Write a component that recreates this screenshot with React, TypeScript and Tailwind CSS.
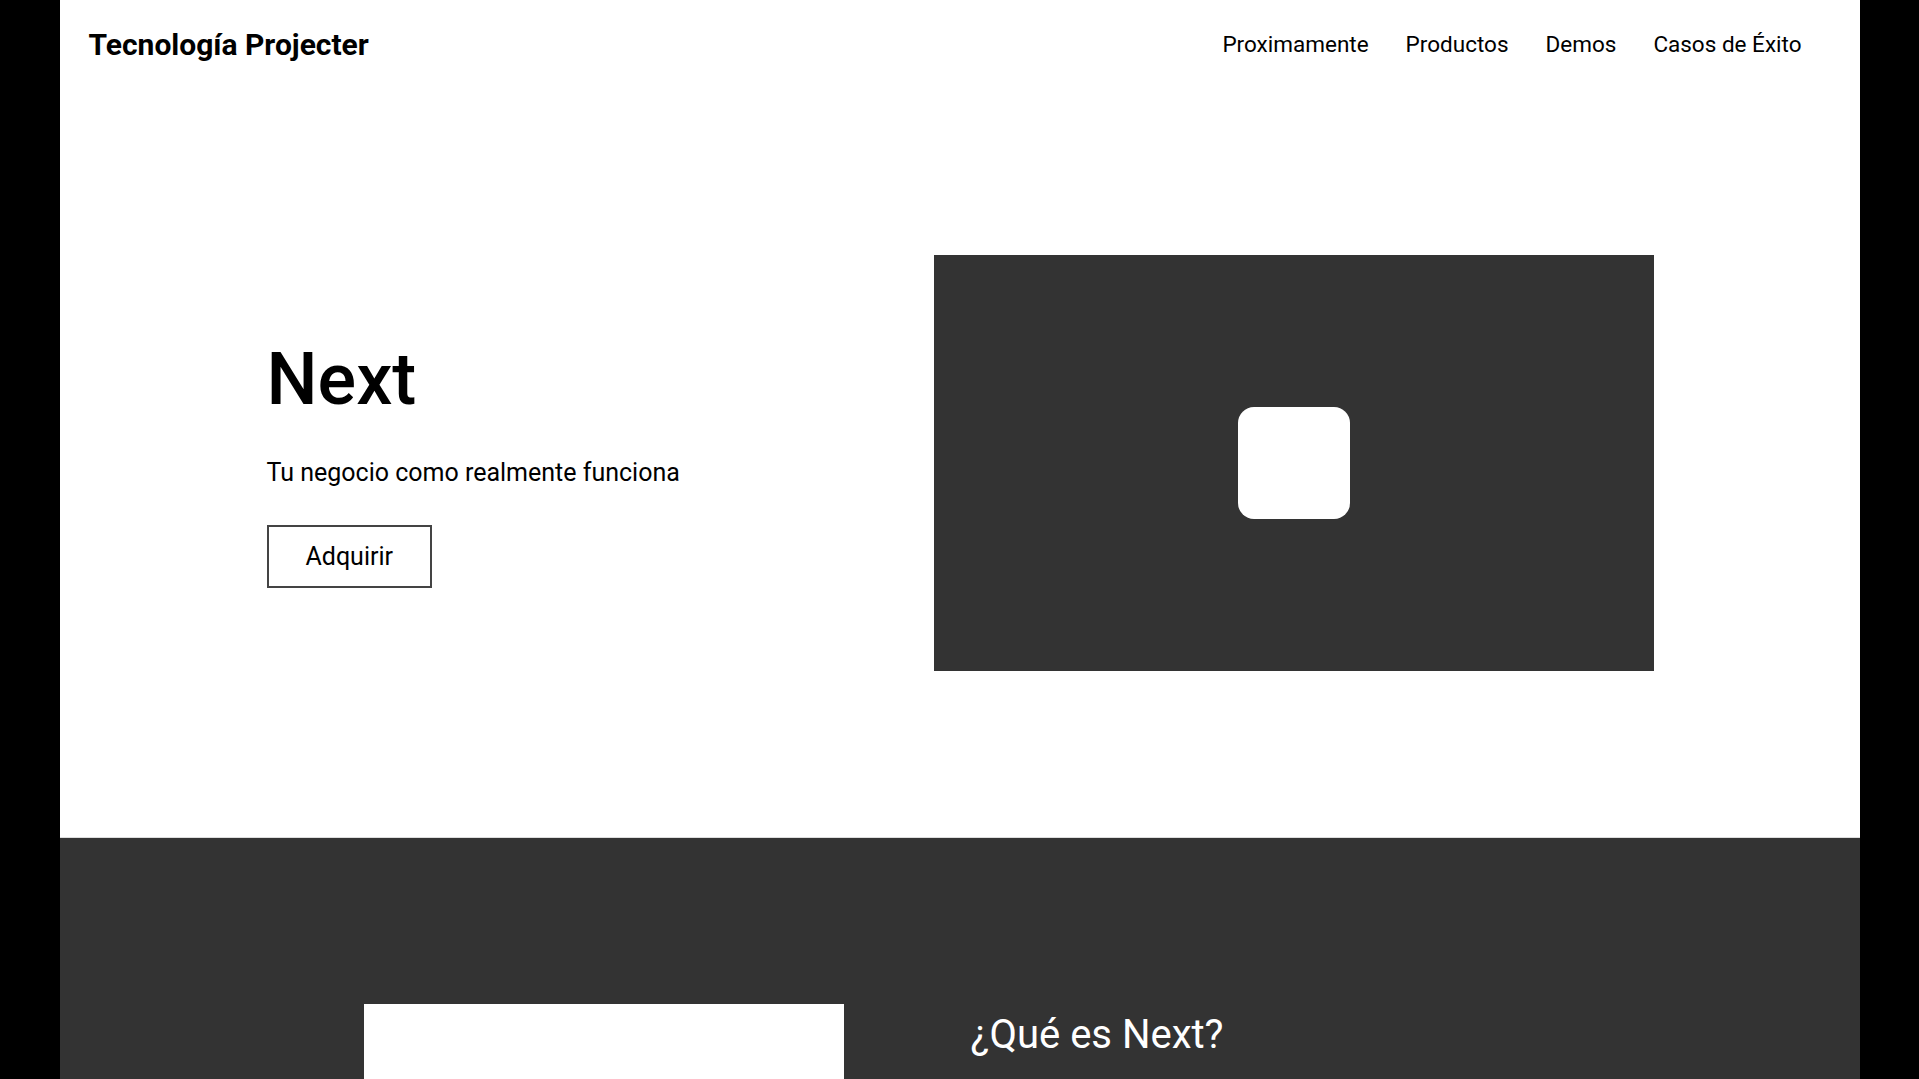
import React from 'react';

const navItems = ['Proximamente', 'Productos', 'Demos', 'Casos de Éxito'];

const App: React.FC = () => {
  return (
    <div className="min-h-screen bg-black font-['Roboto',sans-serif] text-black">
      <div className="max-w-[1800px] mx-auto bg-white">
        <header className="h-[88px] flex items-center justify-between pl-[29px] pr-[58px]">
          <h1 className="text-[30px] font-bold">Tecnología Projecter</h1>
          <nav className="flex gap-[37px] text-[22.5px] mt-[2px]">
            {navItems.map(item => (
              <a key={item} href="#" className="text-black">{item}</a>
            ))}
          </nav>
        </header>

        <section className="h-[750px] flex items-center justify-between pl-[207px] pr-[206px] border-b border-[#ddd]">
          <div className="mt-[6px]">
            <h2 className="text-[72px] font-medium leading-none">Next</h2>
            <p className="mt-[41px] text-[25px] leading-[32px]">Tu negocio como realmente funciona</p>
            <button className="mt-9 px-[37px] py-[15px] text-[25px] leading-[29px] border-2 border-[#444] bg-white">
              Adquirir
            </button>
          </div>
          <div className="w-[720px] h-[416px] bg-[#333] flex items-center justify-center">
            <div className="w-[112px] h-[112px] rounded-[16px] bg-white"></div>
          </div>
        </section>

        <section className="bg-[#333] pt-[166px] pb-[160px] pl-[304px] flex items-start">
          <div className="w-[480px] h-[420px] bg-white"></div>
          <div className="ml-[127px] mt-[9px]">
            <h3 className="text-[40px] leading-[44px] text-white">¿Qué es Next?</h3>
          </div>
        </section>
      </div>
    </div>
  );
};

export default App;
